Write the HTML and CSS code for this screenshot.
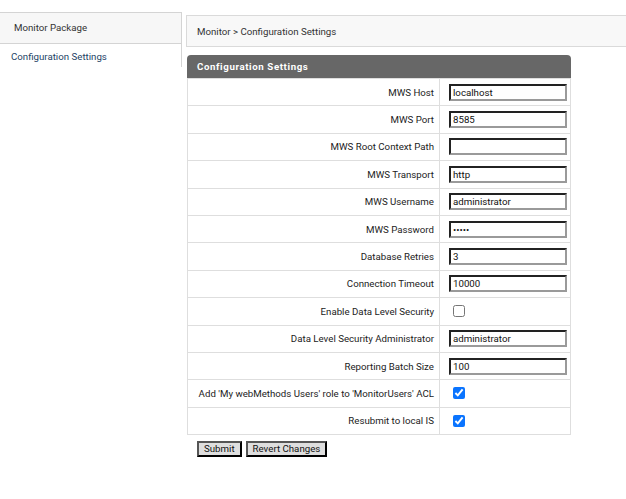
FILE: index.html
```html
<!DOCTYPE html>
<html>
<head>
<meta charset="utf-8">
<link rel="stylesheet" href="styles.css">
</head>
<body>
<div class="page">
  <aside class="sidebar">
    <div class="side-head">Monitor Package</div>
    <a class="side-link" href="#">Configuration Settings</a>
  </aside>
  <main class="main">
    <div class="crumb">Monitor &gt; Configuration Settings</div>
    <form class="panel">
      <div class="panel-head">Configuration Settings</div>
      <table class="grid">
        <tr><td class="lbl">MWS Host</td><td class="val"><input class="txt" type="text" value="localhost"></td></tr>
        <tr><td class="lbl">MWS Port</td><td class="val"><input class="txt" type="text" value="8585"></td></tr>
        <tr><td class="lbl">MWS Root Context Path</td><td class="val"><input class="txt" type="text" value=""></td></tr>
        <tr><td class="lbl">MWS Transport</td><td class="val"><input class="txt" type="text" value="http"></td></tr>
        <tr><td class="lbl">MWS Username</td><td class="val"><input class="txt" type="text" value="administrator"></td></tr>
        <tr><td class="lbl">MWS Password</td><td class="val"><input class="txt" type="password" value="xxxxx"></td></tr>
        <tr><td class="lbl">Database Retries</td><td class="val"><input class="txt" type="text" value="3"></td></tr>
        <tr><td class="lbl">Connection Timeout</td><td class="val"><input class="txt" type="text" value="10000"></td></tr>
        <tr><td class="lbl">Enable Data Level Security</td><td class="val"><input class="chk" type="checkbox"></td></tr>
        <tr><td class="lbl">Data Level Security Administrator</td><td class="val"><input class="txt" type="text" value="administrator"></td></tr>
        <tr><td class="lbl">Reporting Batch Size</td><td class="val"><input class="txt" type="text" value="100"></td></tr>
        <tr><td class="lbl">Add 'My webMethods Users' role to 'MonitorUsers' ACL</td><td class="val"><input class="chk" type="checkbox" checked></td></tr>
        <tr><td class="lbl">Resubmit to local IS</td><td class="val"><input class="chk" type="checkbox" checked></td></tr>
      </table>
      <div class="actions">
        <button class="btn" type="button">Submit</button>
        <button class="btn" type="button">Revert Changes</button>
      </div>
    </form>
  </main>
</div>
</body>
</html>
```
FILE: styles.css
```css
html, body {
  margin: 0;
  padding: 0;
  background: #fff;
  font-family: Roboto, "Liberation Sans", Arial, sans-serif;
  font-size: 9.7px;
  color: #222;
}
.page {
  display: flex;
  align-items: flex-start;
}
.sidebar {
  width: 182px;
  margin-top: 12px;
  height: 55px;
  border-top: 1px solid #d4d4d4;
  border-right: 1px solid #d4d4d4;
  box-sizing: border-box;
  flex: none;
}
.side-head {
  height: 31px;
  line-height: 29px;
  padding-left: 14px;
  background: #f7f7f7;
  border-bottom: 1px solid #d4d4d4;
  box-sizing: border-box;
  color: #333;
}
.side-link {
  display: block;
  padding: 7px 0 0 11px;
  color: #1d3f66;
  text-decoration: none;
}
.main {
  flex: 1;
  margin-left: 4px;
  margin-top: 15px;
  margin-right: -2px;
}
.crumb {
  height: 32px;
  line-height: 31px;
  box-sizing: border-box;
  padding-left: 10px;
  background: #f8f8f8;
  border: 1px solid #dadada;
  color: #333;
}
.panel {
  margin: 8px 0 0 1px;
  width: 384px;
}
.panel-head {
  height: 23px;
  line-height: 24px;
  background: #676767;
  border-radius: 4px 4px 0 0;
  color: #fff;
  font-weight: bold;
  letter-spacing: 0.6px;
  padding-left: 10px;
}
.grid {
  width: 100%;
  table-layout: fixed;
  border-collapse: collapse;
  border: 1px solid #dedede;
}
.grid td {
  border-top: 1px solid #dedede;
  border-bottom: 1px solid #dedede;
  height: 26.4px;
  padding: 0;
  vertical-align: middle;
}
.grid tr:first-child td {
  border-top: none;
}
.lbl {
  width: 246px;
  text-align: right;
  padding-right: 5px !important;
  border-right: 1px solid #dedede;
  color: #222;
  white-space: nowrap;
}
.val {
  padding-left: 9px !important;
}
.txt {
  display: block;
  width: 118px;
  height: 17px;
  box-sizing: border-box;
  margin: 0;
  padding: 0 2px;
  border-width: 2px;
  border-style: solid;
  border-color: #222 #9a9a9a #9a9a9a #222;
  font-family: Roboto, "Liberation Sans", Arial, sans-serif;
  font-size: 9.7px;
  color: #111;
  background: #fff;
}
.chk {
  display: block;
  width: 12px;
  height: 12px;
  margin: 0 0 0 4px;
  accent-color: #0a74ff;
}
.actions {
  display: flex;
  gap: 4px;
  padding: 6px 0 0 10px;
}
.btn {
  height: 16px;
  padding: 0 5px;
  margin: 0;
  font-family: Roboto, "Liberation Sans", Arial, sans-serif;
  font-size: 9.7px;
  color: #111;
  background: #dedede;
  border-width: 2px;
  border-style: solid;
  border-color: #555 #000 #000 #555;
  line-height: 12px;
}
```
